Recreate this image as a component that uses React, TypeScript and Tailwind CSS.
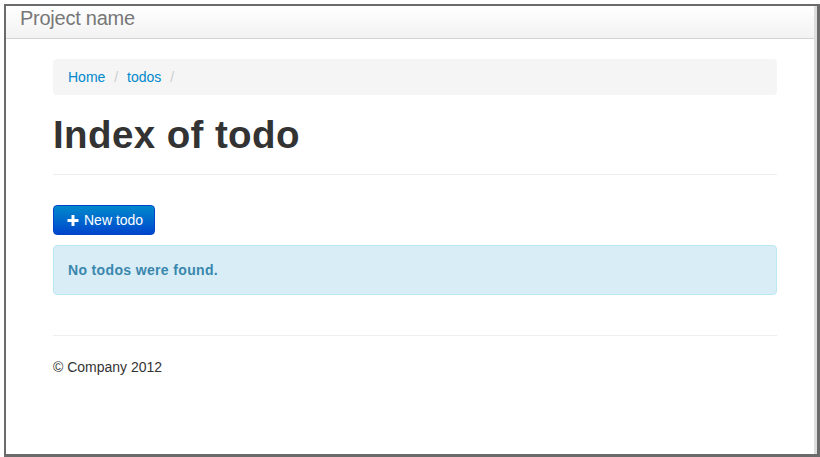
import React from "react";

export default function App() {
  return (
    <div className="w-[820px] h-[457px] bg-white pt-[4px] pl-[4px] overflow-hidden" style={{ fontFamily: '"Liberation Sans", Arial, sans-serif' }}>
      <div className="w-[816px] h-[453px] border-t-2 border-l-2 border-r-[3px] border-b-[3px] border-[#6b6b6b] flex">
        <div className="flex-1 flex flex-col min-w-0">
          <div className="h-[33px] border-b border-[#d4d4d4] bg-gradient-to-b from-white to-[#f2f2f2] pl-[14px] pt-[2px]">
            <span className="text-[20px] leading-[20px] tracking-[-0.25px] text-[#777777] block">Project name</span>
          </div>
          <div className="ml-[47px] w-[724px] pt-[20px] text-[14px] leading-[20px] text-[#333333]">
            <ul className="h-[36px] bg-[#f5f5f5] rounded-[4px] px-[15px] py-[8px] flex">
              <li className="flex">
                <a className="text-[#0088cc]">Home</a>
                <span className="text-[#cccccc] px-[5px]">&nbsp;/&nbsp;</span>
              </li>
              <li className="flex">
                <a className="text-[#0088cc]">todos</a>
                <span className="text-[#cccccc] px-[5px]">&nbsp;/&nbsp;</span>
              </li>
            </ul>
            <div className="mt-[20px] pb-[9px] border-b border-[#eeeeee]">
              <h1 className="text-[38.5px] leading-[40px] tracking-[0.4px] font-bold text-[#333333] mb-[10px]">Index of todo</h1>
            </div>
            <div className="mt-[30px]">
              <button className="h-[30px] pl-[12px] pr-[11px] rounded-[4px] border border-[#0044cc] bg-gradient-to-b from-[#0088cc] to-[#0044cc] text-white text-[14px] leading-[20px] flex items-center">
                <svg width="14" height="14" viewBox="0 0 14 14" className="mr-[4px]">
                  <rect x="5.5" y="2" width="3" height="11" fill="white" />
                  <rect x="1.5" y="6" width="11" height="3" fill="white" />
                </svg>
                New todo
              </button>
            </div>
            <div className="mt-[10px] h-[50px] bg-[#d9edf7] border border-[#bce8f1] rounded-[4px] pl-[14px] flex items-center">
              <strong className="text-[#3a87ad] font-bold tracking-[0.35px]">No todos were found.</strong>
            </div>
            <div className="mt-[40px] border-t border-[#eeeeee]"></div>
            <p className="mt-[21px]">© Company 2012</p>
          </div>
        </div>
        <div className="w-[3px] bg-[#dddddd]"></div>
      </div>
    </div>
  );
}
